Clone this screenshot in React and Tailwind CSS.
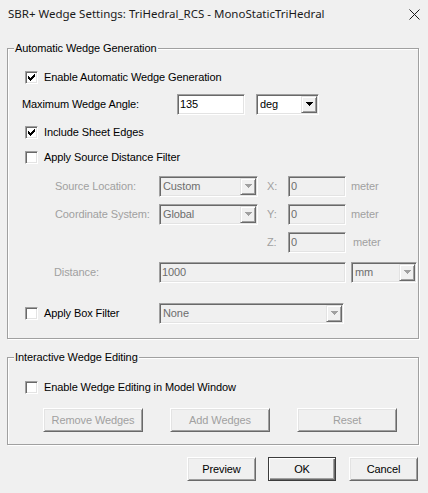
import React from "react";

const sunken =
  "border border-t-[#a0a0a0] border-l-[#a0a0a0] border-r-white border-b-white shadow-[inset_1px_1px_0_#696969,inset_-1px_-1px_0_#e3e3e3]";
const raisedSmall =
  "border border-t-[#e3e3e3] border-l-[#e3e3e3] border-r-[#696969] border-b-[#696969] shadow-[inset_1px_1px_0_#fff,inset_-1px_-1px_0_#a0a0a0] bg-[#f0f0f0]";

function CheckMark() {
  const cols = [2, 3, 4, 3, 2, 1, 0];
  return (
    <svg width="7" height="7" viewBox="0 0 7 7" shapeRendering="crispEdges">
      {cols.map((y, x) => (
        <rect key={x} x={x} y={y} width="1" height="3" fill="#000" />
      ))}
    </svg>
  );
}

function Check({ checked, label }) {
  return (
    <div className="flex items-center">
      <div
        className={`w-[13px] h-[13px] bg-white flex items-center justify-center ${sunken}`}
      >
        {checked && <CheckMark />}
      </div>
      <span className="ml-[6px] whitespace-nowrap">{label}</span>
    </div>
  );
}

function Arrow({ enabled }) {
  return (
    <svg width="7" height="4" viewBox="0 0 7 4" shapeRendering="crispEdges">
      <polygon points="0,0 7,0 3.5,4" fill={enabled ? "#000" : "#a0a0a0"} />
    </svg>
  );
}

function Combo({ w, value, enabled }) {
  return (
    <div
      className={`${w} h-[21px] p-[1px] flex items-stretch ${sunken} ${
        enabled ? "bg-white" : "bg-[#f0f0f0]"
      }`}
    >
      <span
        className={`flex-1 pl-[2px] flex items-center whitespace-nowrap ${
          enabled ? "text-black" : "text-[#6d6d6d]"
        }`}
      >
        {value}
      </span>
      <div className={`w-[16px] flex items-center justify-center ${raisedSmall}`}>
        <Arrow enabled={enabled} />
      </div>
    </div>
  );
}

function Field({ w, value, enabled }) {
  return (
    <div
      className={`${w} h-[21px] pl-[2px] flex items-center ${sunken} ${
        enabled ? "bg-white text-black" : "bg-[#f0f0f0] text-[#6d6d6d]"
      }`}
    >
      {value}
    </div>
  );
}

function Btn({ w, label, disabled, def }) {
  const frame = def
    ? "border border-[#3c3c3c] shadow-[inset_1px_1px_0_#fff,inset_-1px_-1px_0_#696969,inset_-2px_-2px_0_#a0a0a0]"
    : "border border-t-white border-l-white border-r-[#696969] border-b-[#696969] shadow-[inset_1px_1px_0_#e3e3e3,inset_-1px_-1px_0_#a0a0a0]";
  return (
    <div
      className={`${w} h-[24px] flex items-center justify-center bg-[#f0f0f0] ${frame} ${
        disabled ? "text-[#a0a0a0]" : "text-black"
      }`}
    >
      {label}
    </div>
  );
}

function Group({ title, children, className }) {
  return (
    <div
      className={`relative ml-[7px] w-[412px] border border-[#a0a0a0] shadow-[inset_1px_1px_0_#fff,1px_1px_0_#fff] ${className}`}
    >
      <span className="absolute left-[6px] -top-[8px] px-[1px] bg-[#f0f0f0] leading-[14px] whitespace-nowrap">
        {title}
      </span>
      {children}
    </div>
  );
}

const dis = "text-[#a0a0a0]";

export default function App() {
  return (
    <div className="w-[428px] h-[493px] bg-[#f0f0f0] overflow-hidden flex flex-col font-['Liberation_Sans',Arial,sans-serif] text-[11px] tracking-[-0.1px] text-black">
      <div className="h-[28px] flex items-center justify-between pl-[8px] pr-[8px]">
        <span className="text-[11.5px] tracking-normal font-['Noto_Sans','Liberation_Sans',sans-serif] text-[#1a1a1a] whitespace-nowrap">
          SBR+ Wedge Settings: TriHedral_RCS - MonoStaticTriHedral
        </span>
        <svg width="11" height="11" viewBox="0 0 11 11">
          <path d="M0.5 0.5 L10.5 10.5 M10.5 0.5 L0.5 10.5" stroke="#1a1a1a" strokeWidth="1" />
        </svg>
      </div>

      <Group title="Automatic Wedge Generation" className="mt-[20px] pt-[17px] pb-[14px]">
        <div className="h-[22px] flex items-center pl-[17px]">
          <Check checked label="Enable Automatic Wedge Generation" />
        </div>
        <div className="h-[22px] mt-[5px] flex items-center pl-[14px]">
          <span className="w-[155px] whitespace-nowrap">Maximum Wedge Angle:</span>
          <Field w="w-[68px]" value="135" enabled />
          <div className="ml-[11px]">
            <Combo w="w-[63px]" value="deg" enabled />
          </div>
        </div>
        <div className="h-[22px] mt-[6px] flex items-center pl-[17px]">
          <Check checked label="Include Sheet Edges" />
        </div>
        <div className="h-[22px] mt-[3px] flex items-center pl-[17px]">
          <Check label="Apply Source Distance Filter" />
        </div>
        <div className="h-[22px] mt-[7px] flex items-center pl-[47px]">
          <span className={`w-[104px] whitespace-nowrap ${dis}`}>Source Location:</span>
          <Combo w="w-[99px]" value="Custom" />
          <span className={`ml-[9px] w-[21px] ${dis}`}>X:</span>
          <Field w="w-[58px]" value="0" />
          <span className={`ml-[5px] ${dis}`}>meter</span>
        </div>
        <div className="h-[22px] mt-[6px] flex items-center pl-[47px]">
          <span className={`w-[104px] whitespace-nowrap ${dis}`}>Coordinate System:</span>
          <Combo w="w-[99px]" value="Global" />
          <span className={`ml-[9px] w-[21px] ${dis}`}>Y:</span>
          <Field w="w-[58px]" value="0" />
          <span className={`ml-[5px] ${dis}`}>meter</span>
        </div>
        <div className="h-[22px] mt-[6px] flex items-center pl-[259px]">
          <span className={`w-[21px] ${dis}`}>Z:</span>
          <Field w="w-[58px]" value="0" />
          <span className={`ml-[7px] ${dis}`}>meter</span>
        </div>
        <div className="h-[22px] mt-[8px] flex items-center pl-[46px]">
          <span className={`w-[105px] whitespace-nowrap ${dis}`}>Distance:</span>
          <Field w="w-[187px]" value="1000" />
          <div className="ml-[5px]">
            <Combo w="w-[66px]" value="mm" />
          </div>
        </div>
        <div className="h-[22px] mt-[19px] flex items-center pl-[17px]">
          <div className="w-[134px]">
            <Check label="Apply Box Filter" />
          </div>
          <Combo w="w-[185px]" value="None" />
        </div>
      </Group>

      <Group title="Interactive Wedge Editing" className="mt-[18px] pt-[18px] pb-[12px]">
        <div className="h-[22px] flex items-center pl-[17px]">
          <Check label="Enable Wedge Editing in Model Window" />
        </div>
        <div className="mt-[10px] flex items-center pl-[35px] gap-[27px]">
          <Btn w="w-[100px]" label="Remove Wedges" disabled />
          <Btn w="w-[100px]" label="Add Wedges" disabled />
          <Btn w="w-[100px]" label="Reset" disabled />
        </div>
      </Group>

      <div className="mt-[12px] flex justify-end pr-[10px]">
        <Btn w="w-[69px]" label="Preview" />
        <div className="ml-[12px]">
          <Btn w="w-[68px]" label="OK" def />
        </div>
        <div className="ml-[13px]">
          <Btn w="w-[69px]" label="Cancel" />
        </div>
      </div>
    </div>
  );
}
